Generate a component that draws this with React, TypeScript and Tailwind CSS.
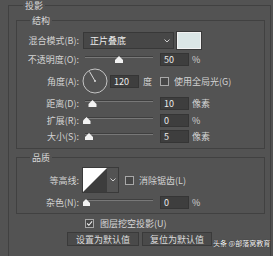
import React from "react";

const LABEL = "w-[62px] shrink-0 text-right text-[#d2d2d2]";
const INPUT =
  "w-[29px] h-[13px] shrink-0 bg-[#3e3e3e] border border-[#353535] pl-[3px] leading-[11px] text-[#ececec]";

function Slider({ pos }: { pos: number }) {
  return (
    <svg width="73" height="13" className="ml-[4px] shrink-0">
      <line x1="2" y1="3.5" x2="70" y2="3.5" stroke="#3f3f3f" strokeWidth="1" />
      <line x1="2" y1="4.5" x2="70" y2="4.5" stroke="#787878" strokeWidth="1" />
      <polygon
        points={`${pos},3 ${pos + 4},7 ${pos + 4},10 ${pos - 4},10 ${pos - 4},7`}
        fill="#f2f2f2"
      />
    </svg>
  );
}

function Check({ on }: { on?: boolean }) {
  return (
    <div className="w-[9px] h-[9px] shrink-0 border border-[#a8a8a8] bg-[#474747] flex items-center justify-center">
      {on && (
        <svg width="9" height="9" viewBox="0 0 9 9">
          <path d="M1.5 4.5 L3.7 6.8 L7.8 1.8" fill="none" stroke="#f0f0f0" strokeWidth="1.4" />
        </svg>
      )}
    </div>
  );
}

function Title({ text, ml }: { text: string; ml: string }) {
  return (
    <div className={`${ml} -mt-[6px] -mb-[5px] h-[11px] w-fit px-[2px] bg-[#535353] leading-[11px] text-[#d8d8d8]`}>
      {text}
    </div>
  );
}

function SliderRow({ label, pos, value, unit, mt }: { label: string; pos: number; value: string; unit: string; mt: string }) {
  return (
    <div className={`${mt} h-[13px] flex items-center`}>
      <span className={LABEL}>{label}</span>
      <Slider pos={pos} />
      <div className={`${INPUT} ml-[4px]`}>{value}</div>
      <span className="ml-[3px] text-[#d2d2d2]">{unit}</span>
    </div>
  );
}

export default function App() {
  return (
    <div className="relative w-[273px] h-[256px] overflow-hidden bg-[#535353] pt-[5px] text-[9px] leading-[13px] font-['Noto_Sans_CJK_SC','Liberation_Sans',sans-serif]">
      <div className="ml-[8px] w-[263px] h-[260px] border-l border-t border-r border-[#414141]">
        <Title text="投影" ml="ml-[14px]" />

        {/* 结构 */}
        <div className="mt-[14px] ml-[7px] mr-[5px] border border-[#414141] pb-[5px]">
          <Title text="结构" ml="ml-[13px]" />

          <div className="mt-[11px] h-[17px] flex items-center">
            <span className={LABEL}>混合模式(B):</span>
            <div className="ml-[4px] w-[91px] h-[17px] bg-[#474747] border border-[#383838] flex items-center pl-[6px] pr-[3px] text-[#ececec]">
              <span className="flex-1">正片叠底</span>
              <svg width="6" height="4" viewBox="0 0 6 4">
                <path d="M0.5 0.5 L3 3 L5.5 0.5" fill="none" stroke="#cfcfcf" strokeWidth="1" />
              </svg>
            </div>
            <div className="ml-[3px] w-[24px] h-[17px] bg-[#dbe6e6] border border-[#f2f2f2] outline outline-1 outline-[#3a3a3a]" />
          </div>

          <SliderRow label="不透明度(O):" pos={36} value="50" unit="%" mt="mt-[4px]" />

          <div className="mt-[2px] h-[26px] flex items-center">
            <span className={LABEL}>角度(A):</span>
            <svg width="26" height="26" viewBox="0 0 26 26" className="ml-[3px] shrink-0">
              <circle cx="13" cy="13" r="12" fill="none" stroke="#c4c4c4" strokeWidth="1" />
              <line x1="13" y1="13" x2="7.5" y2="3.5" stroke="#d8d8d8" strokeWidth="1" />
              <circle cx="13" cy="13" r="1" fill="#d8d8d8" />
            </svg>
            <div className={`${INPUT} ml-[2px]`}>120</div>
            <span className="ml-[4px] text-[#d2d2d2]">度</span>
            <div className="ml-[8px]">
              <Check />
            </div>
            <span className="ml-[5px] text-[#d2d2d2]">使用全局光(G)</span>
          </div>

          <SliderRow label="距离(D):" pos={9.5} value="10" unit="像素" mt="mt-[3px]" />
          <SliderRow label="扩展(R):" pos={3.5} value="0" unit="%" mt="mt-[4px]" />
          <SliderRow label="大小(S):" pos={6} value="5" unit="像素" mt="mt-[3px]" />
        </div>

        {/* 品质 */}
        <div className="mt-[8px] ml-[7px] mr-[5px] border border-[#414141] pb-[4px]">
          <Title text="品质" ml="ml-[13px]" />

          <div className="mt-[9px] h-[26px] flex items-center">
            <span className={LABEL}>等高线:</span>
            <div className="ml-[3px] h-[26px] flex items-center border border-[#3a3a3a]">
              <svg width="24" height="24" viewBox="0 0 24 24" className="shrink-0">
                <rect x="0" y="0" width="24" height="24" fill="#3d3d3d" />
                <polygon points="0,0 24,0 0,24" fill="#ffffff" />
              </svg>
              <div className="w-[11px] h-[24px] flex items-center justify-center">
                <svg width="6" height="4" viewBox="0 0 6 4">
                  <path d="M0.5 0.5 L3 3 L5.5 0.5" fill="none" stroke="#cfcfcf" strokeWidth="1" />
                </svg>
              </div>
            </div>
            <div className="ml-[6px]">
              <Check />
            </div>
            <span className="ml-[5px] text-[#d2d2d2]">消除锯齿(L)</span>
          </div>

          <SliderRow label="杂色(N):" pos={3} value="0" unit="%" mt="mt-[3px]" />
        </div>

        <div className="mt-[3px] h-[13px] flex items-center">
          <div className="ml-[76px]">
            <Check on />
          </div>
          <span className="ml-[6px] text-[#d8d8d8]">图层挖空投影(U)</span>
        </div>

        <div className="mt-[2px] flex gap-[3px] ml-[58px]">
          <div className="w-[72px] h-[14px] bg-[#4a4a4a] border border-[#3a3a3a] flex items-center justify-center text-[#dcdcdc]">
            设置为默认值
          </div>
          <div className="w-[70px] h-[14px] bg-[#4a4a4a] border border-[#3a3a3a] flex items-center justify-center text-[#dcdcdc]">
            复位为默认值
          </div>
        </div>
      </div>

      <div className="absolute left-[213px] top-[238px] text-[7px] leading-[10px] text-white [text-shadow:0_0_1px_#000] whitespace-nowrap">
        头条 @部落窝教育
      </div>
    </div>
  );
}
